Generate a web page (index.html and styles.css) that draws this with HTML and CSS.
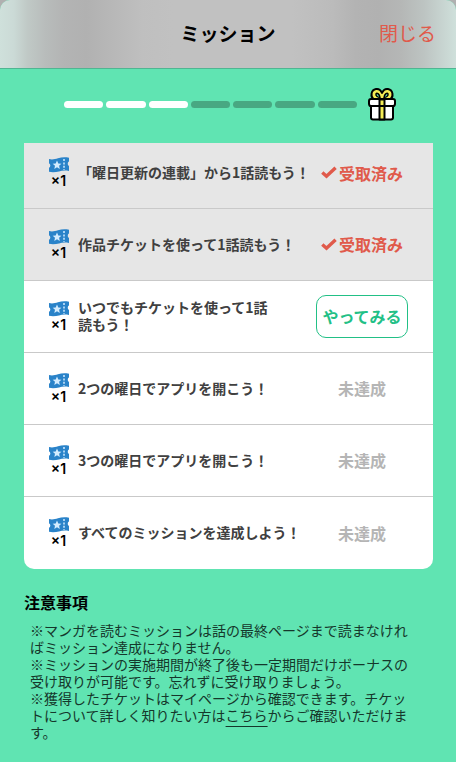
FILE: index.html
```html
<!DOCTYPE html>
<html lang="ja">
<head>
<meta charset="utf-8">
<meta name="viewport" content="width=device-width, initial-scale=1">
<title>ミッション</title>
<link rel="stylesheet" href="styles.css">
</head>
<body>
<svg class="defs" aria-hidden="true">
  <symbol id="ticket" viewBox="0 0 20 16">
    <path fill="#2a83c9" d="M0 2C3.500 3 6 2 9 1.200S16 0 20 .8V4.600C18.400 5.200 18.400 8.400 20 9V14C16 13.200 13 13.600 10 14.400S3.500 15.600 0 14.800V10.800C1.800 10 1.800 7 0 6.200Z"/>
    <path fill="#d3ecff" d="M8 3.600 9.300 6.500 12.400 6.800 10.100 8.800 10.800 11.900 8 10.300 5.300 11.900 6 8.800 3.700 6.800 6.700 6.500Z"/>
    <path stroke="#d3ecff" stroke-width="1.500" stroke-dasharray="2 1.400" d="M15 2V13"/>
  </symbol>
  <symbol id="check" viewBox="0 0 16 13">
    <path fill="none" stroke="#e05a4b" stroke-width="3.400" d="M1.300 6.500 5.500 10.300 14.600 1.800"/>
  </symbol>
</svg>
<div class="sheet">
  <header class="bar">
    <h1 class="title">ミッション</h1>
    <button class="close" type="button">閉じる</button>
  </header>
  <main>
    <div class="progress" role="img" aria-label="3 / 7">
      <span class="step done"></span><span class="step done"></span><span class="step done"></span>
      <span class="step"></span><span class="step"></span><span class="step"></span><span class="step"></span>
      <svg class="gift" viewBox="0 0 28 34" aria-hidden="true">
        <g stroke="#000" stroke-width="2" stroke-linejoin="round">
          <path fill="#fff" d="M3 17H25V30Q25 32 23 32H5Q3 32 3 30Z"/>
          <path fill="#fff" d="M3 11.500H25Q27 11.500 27 13.500V16Q27 18.500 25 18.500H3Q1 18.500 1 16V13.500Q1 11.500 3 11.500Z"/>
          <path fill="#f4ec55" d="M11.500 12H16.500V32H11.500Z"/>
          <path fill="none" d="M1.500 18.500H26.500"/>
          <path fill="#f4ec55" d="M14 11.500H5.500C2.500 9.500 2.500 2.500 8 1.500C11 1 13 3 14 5.500C15 3 17 1 20 1.500C25.500 2.500 25.500 9.500 22.500 11.500Z"/>
          <path fill="#60e4b2" stroke-width="1.500" d="M12 10C10 10 7.500 8.500 8 6.500S11.500 6.500 12 10ZM16 10C18 10 20.500 8.500 20 6.500S16.500 6.500 16 10Z"/>
        </g>
      </svg>
    </div>
    <ul class="missions">
      <li class="mission received">
        <div class="reward"><svg class="ticket"><use href="#ticket"/></svg><span>×1</span></div>
        <p class="task">「曜日更新の連載」から1話読もう！</p>
        <div class="status"><svg class="check"><use href="#check"/></svg>受取済み</div>
      </li>
      <li class="mission received">
        <div class="reward"><svg class="ticket"><use href="#ticket"/></svg><span>×1</span></div>
        <p class="task">作品チケットを使って1話読もう！</p>
        <div class="status"><svg class="check"><use href="#check"/></svg>受取済み</div>
      </li>
      <li class="mission">
        <div class="reward"><svg class="ticket"><use href="#ticket"/></svg><span>×1</span></div>
        <p class="task">いつでもチケットを使って1話<br>読もう！</p>
        <div class="status"><button class="try" type="button">やってみる</button></div>
      </li>
      <li class="mission">
        <div class="reward"><svg class="ticket"><use href="#ticket"/></svg><span>×1</span></div>
        <p class="task">2つの曜日でアプリを開こう！</p>
        <div class="status">未達成</div>
      </li>
      <li class="mission">
        <div class="reward"><svg class="ticket"><use href="#ticket"/></svg><span>×1</span></div>
        <p class="task">3つの曜日でアプリを開こう！</p>
        <div class="status">未達成</div>
      </li>
      <li class="mission">
        <div class="reward"><svg class="ticket"><use href="#ticket"/></svg><span>×1</span></div>
        <p class="task">すべてのミッションを達成しよう！</p>
        <div class="status">未達成</div>
      </li>
    </ul>
    <section class="notes">
      <h2 class="notes-title">注意事項</h2>
      <p class="note">※マンガを読むミッションは話の最終ページまで読まなけれ<br>ばミッション達成になりません。</p>
      <p class="note">※ミッションの実施期間が終了後も一定期間だけボーナスの<br>受け取りが可能です。忘れずに受け取りましょう。</p>
      <p class="note">※獲得したチケットはマイページから確認できます。チケッ<br>トについて詳しく知りたい方は<a href="#">こちら</a>からご確認いただけま<br>す。</p>
    </section>
  </main>
</div>
</body>
</html>
```

FILE: styles.css
```css
* { box-sizing: border-box; }

body {
  margin: 0;
  background: #b0b0b0;
  font-family: "Noto Sans CJK JP", sans-serif;
  color: #000;
}

h1, h2, p, ul { margin: 0; padding: 0; }

button {
  padding: 0;
  border: 0;
  background: none;
  font-family: inherit;
}

.defs { display: none; }

.sheet {
  min-height: 100vh;
  border-radius: 10px 10px 0 0;
  background: #60e4b2;
  overflow: hidden;
}

.bar {
  display: grid;
  grid-template-columns: 1fr auto 1fr;
  align-items: center;
  height: 69px;
  padding: 0 20px 2px;
  border-bottom: 1px solid #50b592;
  background: linear-gradient(90deg, #cfe0db 0%, #cbdad6 3%, #c0c9c6 6%, #b8bcbb 10%, #b3b4b4 14%, #b1b1b1 19%, #b8b8b8 25%, #bfbfbf 31%, #c1c1c1 38%, #c1c1c1 64%, #bbbbbb 73%, #b3b3b3 78%, #b1b1b1 83%, #b5b7b6 88%, #bdc4c2 93%, #cad8d4 98%, #cfe0db 100%);
}

.title {
  grid-column: 2;
  font-size: 19px;
  line-height: 28px;
  font-weight: 700;
}

.close {
  justify-self: end;
  font-size: 19px;
  line-height: 28px;
  color: #e05a4b;
}

.progress {
  display: flex;
  align-items: center;
  gap: 3px;
  padding: 18px 60px 21px 64px;
}

.step {
  flex: 1;
  height: 7px;
  border-radius: 4px;
  background: #48a882;
}

.step.done { background: #fff; }

.gift {
  width: 28px;
  height: 35px;
  margin-left: 8px;
}

.missions {
  margin: 0 23px 0 24px;
  border-radius: 0 0 10px 10px;
  background: #fff;
  overflow: hidden;
  list-style: none;
}

.mission {
  display: flex;
  align-items: center;
  height: 72px;
  padding: 0 21px 1px 24px;
  border-bottom: 1px solid #c9c9c9;
}

.mission:first-child {
  height: 66px;
  padding-bottom: 6px;
}

.mission:last-child { border-bottom: 0; }

.received { background: #e6e6e6; }

.reward {
  display: flex;
  flex-direction: column;
  align-items: center;
  width: 21px;
  font-family: Inter, sans-serif;
  font-size: 14px;
  line-height: 15px;
  font-weight: 600;
}

.ticket {
  width: 20px;
  height: 16px;
}

.task {
  flex: 1;
  padding-left: 9px;
  font-size: 14px;
  line-height: 17px;
  font-weight: 700;
  color: #404040;
  white-space: nowrap;
}

.status {
  display: flex;
  justify-content: center;
  align-items: center;
  gap: 2px;
  width: 100px;
  font-size: 16px;
  line-height: 24px;
  font-weight: 700;
  color: #b5b5b5;
  white-space: nowrap;
}

.received .status { color: #e05a4b; }

.check {
  width: 16px;
  height: 13px;
}

.try {
  width: 92px;
  height: 43px;
  border: 1px solid #22c086;
  border-radius: 10px;
  font-size: 16px;
  font-weight: 700;
  color: #22c086;
}

.notes { padding: 21px 24px; }

.notes-title {
  margin-bottom: 8px;
  font-size: 16px;
  line-height: 24px;
  font-weight: 700;
}

.note {
  padding-left: 6px;
  font-size: 14px;
  line-height: 17px;
  color: #15372b;
}

.note a {
  color: inherit;
  text-decoration: underline;
  text-underline-offset: 5px;
}
```
